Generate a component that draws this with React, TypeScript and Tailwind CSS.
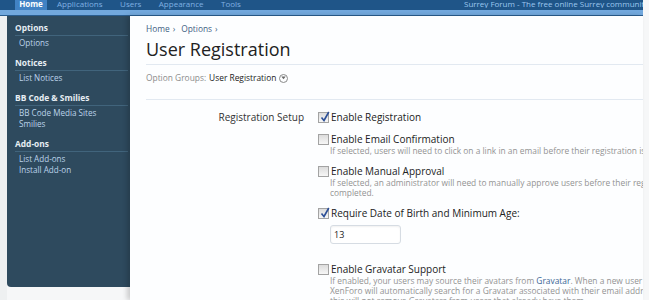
import { ReactNode } from 'react';

const tabs = ['Applications', 'Users', 'Appearance', 'Tools'];

const sidebar = [
  { title: 'Options', links: ['Options'] },
  { title: 'Notices', links: ['List Notices'] },
  { title: 'BB Code & Smilies', links: ['BB Code Media Sites', 'Smilies'] },
  { title: 'Add-ons', links: ['List Add-ons', 'Install Add-on'] },
];

function Checkbox({ checked }: { checked?: boolean }) {
  return (
    <span className="relative mt-[1.5px] block h-[11px] w-[11px] border border-[#a3a3a3] bg-gradient-to-b from-[#dcdcdc] to-[#f7f7f7]">
      {checked && (
        <svg className="absolute -top-[2px] left-[1px]" width="10" height="11" viewBox="0 0 10 11">
          <path d="M1.5 6.5 L4 9.5 L8.8 1" fill="none" stroke="#2c4f97" strokeWidth="1.6" />
        </svg>
      )}
    </span>
  );
}

function Option({ label, checked, children, className = '' }: { label: string; checked?: boolean; children?: ReactNode; className?: string }) {
  return (
    <div className={`grid grid-cols-[12px_auto] ${className}`}>
      <Checkbox checked={checked} />
      <div className="pl-[1px] text-[10px] leading-[14px] text-[#222]">{label}</div>
      {children && <div className="col-start-2">{children}</div>}
    </div>
  );
}

function Hint({ children }: { children: ReactNode }) {
  return <div className="whitespace-nowrap text-[8.4px] leading-[10px] text-[#939393]">{children}</div>;
}

export default function App() {
  return (
    <div className="h-[300px] w-[649px] overflow-hidden bg-[#f6f7f8] font-['Open_Sans',sans-serif]">
      <div className="flex h-full w-[643px] flex-col">
        {/* Top nav */}
        <div className="shrink-0">
          <div className="flex h-[10px] items-start overflow-hidden bg-[#1f5588] text-[8px] leading-[8px]">
            <span className="ml-[15px] flex h-[10px] w-[32px] justify-center bg-[#4182c4] font-bold text-white">Home</span>
            {tabs.map((t, i) => (
              <span key={t} className={`${i === 0 ? 'ml-[10px]' : 'ml-[17.5px]'} text-[#7fb0e2]`}>
                {t}
              </span>
            ))}
            <span className="ml-auto w-[179px] overflow-hidden whitespace-nowrap text-[#9cc7ef]">
              Surrey Forum - The free online Surrey community
            </span>
          </div>
          <div className="h-[5px] bg-[#72a8dd]" />
          <div className="h-[1px] bg-[#2a5d8f]" />
        </div>

        <div className="flex min-h-0 flex-1">
          <div className="w-[7px] shrink-0 bg-[#eef0f1]" />

          {/* Sidebar */}
          <div className="h-[271px] w-[123px] shrink-0 rounded-bl-[4px] bg-[#2e4a5e] pl-[8px] pr-[2px] pt-[5px]">
            {sidebar.map((s) => (
              <div key={s.title} className="mb-[8px]">
                <div className="border-b border-[#41647c] text-[8.4px] font-bold leading-[14px] text-[#e6edf3]">{s.title}</div>
                <div className="pl-[4px] pt-[1px]">
                  {s.links.map((l) => (
                    <div key={l} className="text-[8.1px] leading-[11px] text-[#bcd3ea]">
                      {l}
                    </div>
                  ))}
                </div>
              </div>
            ))}
          </div>

          {/* Main */}
          <div className="relative min-w-0 flex-1 overflow-hidden bg-[#fdfeff] pl-[16px] shadow-[-3px_0_5px_rgba(0,0,0,0.18)]">
            <div className="pt-[7px] text-[8.4px] leading-[12px] text-[#3f6183]">
              <span>Home</span>
              <span className="ml-[3px]">›</span>
              <span className="ml-[6px]">Options</span>
              <span className="ml-[3px]">›</span>
            </div>
            <div className="mt-[2px] border-b border-[#e2e9f1] pb-[3px] text-[18px] leading-[24px] text-[#222]">
              User Registration
            </div>
            <div className="flex items-center border-b border-[#e2e9f1] pb-[15px] pt-[7px] text-[8.4px] leading-[12px]">
              <span className="text-[#8c8c8c]">Option Groups:</span>
              <span className="ml-[3px] text-[#222]">User Registration</span>
              <span className="ml-[3px] flex h-[9px] w-[9px] items-center justify-center rounded-full border border-[#8a8a8a]">
                <svg width="5" height="4" viewBox="0 0 5 4">
                  <path d="M0.3 0.6 L2.5 3.2 L4.7 0.6 Z" fill="#666" />
                </svg>
              </span>
            </div>

            <div className="flex pt-[10px]">
              <div className="w-[158px] shrink-0 text-right text-[10px] leading-[14px] text-[#333]">Registration Setup</div>
              <div className="ml-[14px] flex flex-col gap-[8px]">
                <Option label="Enable Registration" checked />
                <Option label="Enable Email Confirmation">
                  <Hint>If selected, users will need to click on a link in an email before their registration is complete.</Hint>
                </Option>
                <Option label="Enable Manual Approval">
                  <Hint>
                    If selected, an administrator will need to manually approve users before their registration is
                    <br />
                    completed.
                  </Hint>
                </Option>
                <Option label="Require Date of Birth and Minimum Age:" checked className="mb-[10px]">
                  <input
                    readOnly
                    value="13"
                    className="mt-[3px] h-[19px] w-[71px] rounded-[3px] border border-[#d6dce3] bg-white pl-[3px] text-[9px] text-[#222] shadow-[inset_0_1px_2px_rgba(0,0,0,0.06)] outline-none"
                  />
                </Option>
                <Option label="Enable Gravatar Support">
                  <Hint>
                    If enabled, your users may source their avatars from <span className="text-[#3a6796]">Gravatar</span>. When a new user registers,
                    <br />
                    XenForo will automatically search for a Gravatar associated with their email address. Disabling
                    <br />
                    this will not remove Gravatars from users that already have them.
                  </Hint>
                </Option>
              </div>
            </div>
          </div>
        </div>
      </div>
    </div>
  );
}
